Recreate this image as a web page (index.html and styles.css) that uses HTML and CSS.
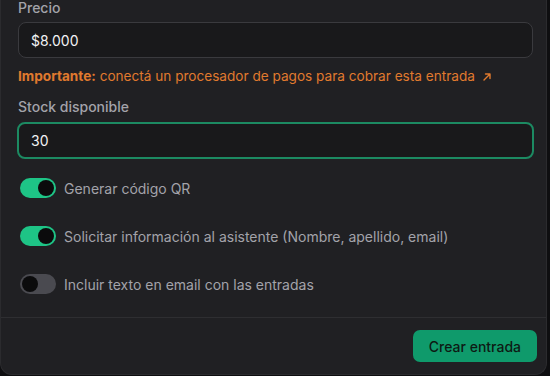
FILE: index.html
```html
<!DOCTYPE html>
<html lang="es">
<head>
<meta charset="utf-8">
<link rel="stylesheet" href="styles.css">
</head>
<body>
<div class="modal">
  <div class="content">
    <label class="label label-first">Precio</label>
    <div class="input">$8.000</div>
    <p class="warn"><strong>Importante:</strong> conectá un procesador de pagos para cobrar esta entrada <svg class="arrow" width="10" height="10" viewBox="0 0 10 10"><path d="M2 8 L8 2 M3.5 2 H8 V6.5" fill="none" stroke="currentColor" stroke-width="1.4" stroke-linecap="round" stroke-linejoin="round"/></svg></p>
    <label class="label">Stock disponible</label>
    <div class="input input-focus">30</div>
    <div class="toggles">
      <div class="row"><span class="switch on"><span class="knob"></span></span><span class="row-text">Generar código QR</span></div>
      <div class="row"><span class="switch on"><span class="knob"></span></span><span class="row-text">Solicitar información al asistente (Nombre, apellido, email)</span></div>
      <div class="row"><span class="switch off"><span class="knob"></span></span><span class="row-text">Incluir texto en email con las entradas</span></div>
    </div>
  </div>
  <div class="footer">
    <button class="btn">Crear entrada</button>
  </div>
</div>
</body>
</html>
```

FILE: styles.css
```css
* { box-sizing: border-box; }
html, body {
  margin: 0;
  padding: 0;
  background: #0e0e10;
  width: 550px;
  height: 376px;
  overflow: hidden;
  font-family: Inter, "Noto Sans", sans-serif;
}
.modal {
  width: 547px;
  height: 375px;
  background: #202023;
  border: 1px solid #2b2b2e;
  border-top: none;
  border-radius: 0 0 12px 12px;
  display: flex;
  flex-direction: column;
}
.content {
  padding: 0 13px 0 17px;
  flex: 1;
}
.label {
  display: block;
  color: #a3a3aa;
  font-size: 14px;
  font-weight: 500;
  line-height: 18px;
  margin-top: 13px;
  margin-bottom: 6px;
}
.label-first {
  margin-top: -1px;
  margin-bottom: 5px;
}
.input {
  height: 36px;
  border: 1px solid #3a3a3e;
  background: #19191b;
  border-radius: 8px;
  color: #f2f2f4;
  font-size: 14px;
  display: flex;
  align-items: center;
  padding: 0 12px;
}
.input-focus {
  border: 2px solid #1c8a62;
  margin-left: -1px;
  margin-right: -1px;
  height: 37px;
  padding: 0 12px;
}
.warn {
  margin: 9px 0 0;
  color: #e07a2e;
  font-size: 13.6px;
  line-height: 18px;
}
.warn strong { font-weight: 700; }
.arrow { vertical-align: -1px; margin-left: 3px; }
.toggles {
  margin-top: 19px;
  display: flex;
  flex-direction: column;
  gap: 28px;
}
.row {
  display: flex;
  align-items: center;
  gap: 8px;
  height: 20px;
  padding-left: 2px;
}
.switch {
  width: 36px;
  height: 20px;
  border-radius: 10px;
  display: flex;
  align-items: center;
  padding: 0 2px;
  flex: none;
}
.switch.on { background: #1ec486; justify-content: flex-end; }
.switch.off { background: #4a4a50; justify-content: flex-start; }
.knob {
  width: 16px;
  height: 16px;
  border-radius: 50%;
  background: #0b0b0c;
}
.row-text {
  color: #a3a3aa;
  font-size: 14px;
}
.footer {
  border-top: 1px solid #2e2e31;
  height: 57px;
  display: flex;
  justify-content: flex-end;
  align-items: flex-start;
  padding: 12px 9px 0 0;
}
.btn {
  height: 32px;
  padding: 0 16px;
  background: #0f9a6b;
  color: #0d1a14;
  border: none;
  border-radius: 7px;
  font-family: Inter, "Noto Sans", sans-serif;
  font-size: 14px;
  font-weight: 500;
}
```
